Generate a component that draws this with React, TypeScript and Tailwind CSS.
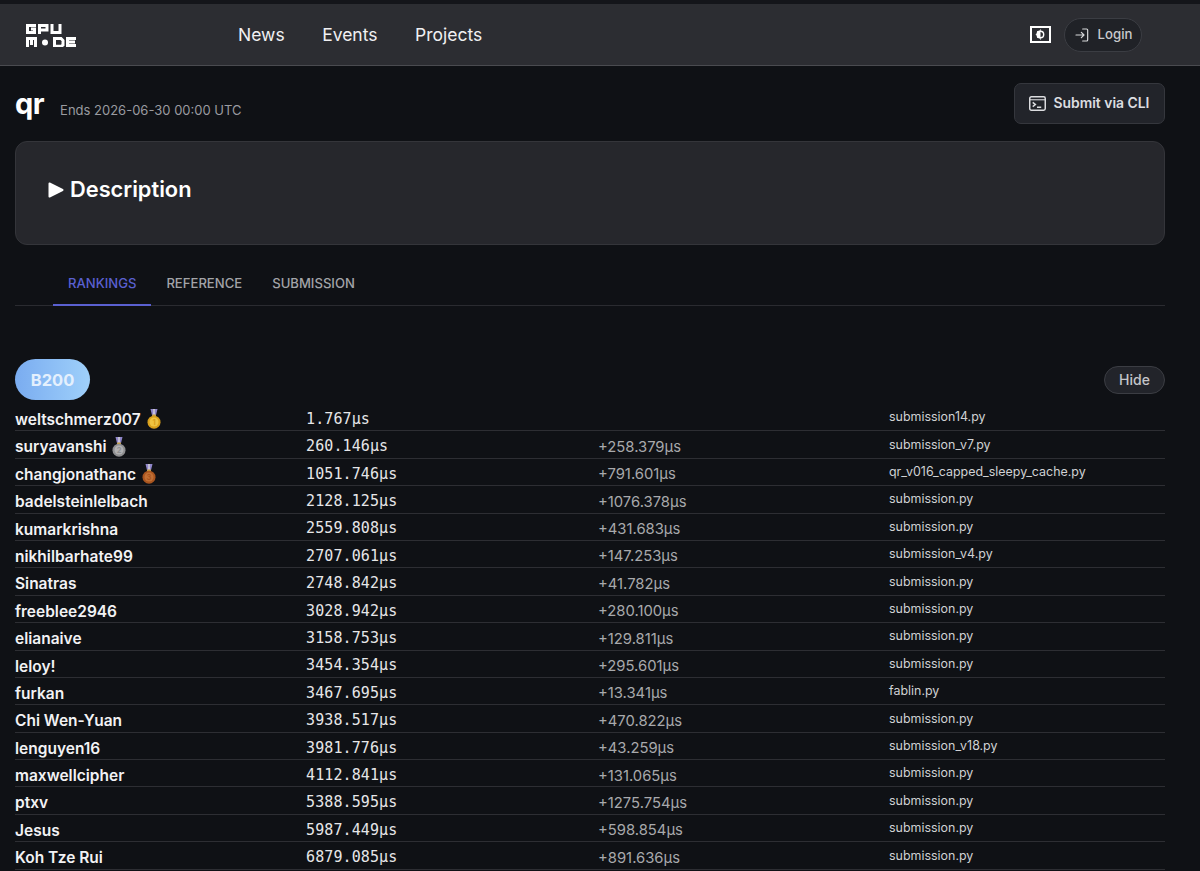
import React from "react";

const rows: [string, string, string, string, number?][] = [
  ["weltschmerz007", "1.767µs", "", "submission14.py", 1],
  ["suryavanshi", "260.146µs", "+258.379µs", "submission_v7.py", 2],
  ["changjonathanc", "1051.746µs", "+791.601µs", "qr_v016_capped_sleepy_cache.py", 3],
  ["badelsteinlelbach", "2128.125µs", "+1076.378µs", "submission.py"],
  ["kumarkrishna", "2559.808µs", "+431.683µs", "submission.py"],
  ["nikhilbarhate99", "2707.061µs", "+147.253µs", "submission_v4.py"],
  ["Sinatras", "2748.842µs", "+41.782µs", "submission.py"],
  ["freeblee2946", "3028.942µs", "+280.100µs", "submission.py"],
  ["elianaive", "3158.753µs", "+129.811µs", "submission.py"],
  ["leloy!", "3454.354µs", "+295.601µs", "submission.py"],
  ["furkan", "3467.695µs", "+13.341µs", "fablin.py"],
  ["Chi Wen-Yuan", "3938.517µs", "+470.822µs", "submission.py"],
  ["lenguyen16", "3981.776µs", "+43.259µs", "submission_v18.py"],
  ["maxwellcipher", "4112.841µs", "+131.065µs", "submission.py"],
  ["ptxv", "5388.595µs", "+1275.754µs", "submission.py"],
  ["Jesus", "5987.449µs", "+598.854µs", "submission.py"],
  ["Koh Tze Rui", "6879.085µs", "+891.636µs", "submission.py"],
];

function Medal({ n }: { n: number }) {
  const fill = n === 1 ? "#d9a01c" : n === 2 ? "#8f8f91" : "#a9551f";
  const hi = n === 1 ? "#f5cf4e" : n === 2 ? "#bcbcbe" : "#c9783c";
  return (
    <svg width="14" height="20" viewBox="0 0 14 20" className="ml-[6px] shrink-0 -mt-[1px]">
      <path d="M3.500 0h2.800L7 4 7.700 0h2.800L8.800 7H5.200z" fill="#8f86c9" />
      <path d="M6.200 0h1.600L7.500 6h-1z" fill="#e9e6f2" />
      <rect x="5.200" y="5.500" width="3.600" height="3" fill="#c9a13a" />
      <circle cx="7" cy="13.200" r="6.500" fill={fill} />
      <circle cx="7" cy="13" r="4.500" fill={hi} opacity="0.75" />
      <text x="7" y="15.800" textAnchor="middle" fontSize="7.500" fontWeight="700" fill={fill} fontFamily="Inter, sans-serif">{n}</text>
    </svg>
  );
}

function Logo() {
  return (
    <svg width="52" height="24" viewBox="0 0 52 24" className="block" fill="none" stroke="#fff" strokeWidth="3">
      <path d="M11 2.500H2.500v7h7V6H6" />
      <path d="M14.500 11V2.500H22v4.500h-7.500" />
      <path d="M27 1v8.500h8V1" />
      <path d="M2.500 24V15.500h8V24M6.500 15.500V22" />
      <circle cx="20" cy="19.500" r="3" fill="#fff" stroke="none" />
      <path d="M29.500 15.500H36l2 2v4.500l-1.500 1.200h-7z" />
      <path d="M51 15.500h-8.500v7H51M42.500 19H50" />
    </svg>
  );
}

export default function App() {
  return (
    <div className="min-h-[871px] h-[871px] overflow-hidden bg-[#0f1115] text-white font-['Inter',sans-serif]">
      <div className="h-[4px] bg-[#14151a]" />
      <header className="h-[62px] bg-[#2c2d32] border-b border-[#4a4b50] flex items-center pl-[25px] pr-[58px]">
        <div className="w-[213px] shrink-0"><Logo /></div>
        <nav className="flex gap-[37.500px] text-[17.500px] leading-none text-[#f0f0f2] font-normal">
          <span>News</span>
          <span>Events</span>
          <span>Projects</span>
        </nav>
        <div className="ml-auto flex items-center gap-[13px]">
          <svg width="21" height="17" viewBox="0 0 21 17" fill="none">
            <rect x="1" y="1" width="19" height="15" stroke="#fff" strokeWidth="2" />
            <path d="M10.500 4.500a4 4 0 0 0 0 8z" fill="#fff" />
            <circle cx="10.500" cy="8.500" r="3.200" stroke="#fff" strokeWidth="1.400" />
            <path d="M10.500 3.500v1M10.500 12.500v1M5.800 8.500h1M7.200 5.200l.8.800M7.200 11.800l.8-.8" stroke="#fff" strokeWidth="1" />
          </svg>
          <button className="h-[34px] w-[78px] rounded-full bg-[#202227] border border-[#3b3d43] flex items-center justify-center gap-[8px] text-[13.200px] font-medium text-[#c9cacd]">
            <svg width="16" height="16" viewBox="0 0 24 24" fill="none" stroke="#d8d9db" strokeWidth="1.800" strokeLinecap="round" strokeLinejoin="round">
              <path d="M13 3h6a1.500 1.500 0 0 1 1.500 1.500v15A1.500 1.500 0 0 1 19 21h-6" />
              <path d="M3 12h12M11 8l4 4-4 4" />
            </svg>
            Login
          </button>
        </div>
      </header>

      <main className="pl-[15px] pr-[35px]">
        <div className="flex items-center justify-between h-[75px]">
          <div className="flex items-center pt-[6px]">
            <h1 className="text-[29px] leading-none font-bold tracking-[-0.5px] -mt-[6px]">qr</h1>
            <span className="ml-[16px] text-[13px] text-[#9a9ba0] mt-[9px]">Ends 2026-06-30 00:00 UTC</span>
          </div>
          <button className="-mt-[1px] h-[41px] w-[151px] rounded-[7px] bg-[#22242a] border border-[#35373d] flex items-center justify-center gap-[8px] text-[13.900px] font-semibold text-[#dcdde0]">
            <svg width="17" height="15" viewBox="0 0 16 14" fill="none" stroke="#dcdde0" strokeWidth="1.400" className="-ml-[1px]">
              <rect x="0.700" y="0.700" width="14.600" height="12.600" rx="1.500" />
              <path d="M0.700 3.500h14.600" strokeWidth="1" />
              <path d="M3.500 6l2.500 2-2.500 2M7.500 10.500h4" />
            </svg>
            Submit via CLI
          </button>
        </div>

        <section className="h-[104px] rounded-[12px] bg-[#26272c] border border-[#34353a] pl-[32px] pt-[34px] flex items-start">
          <svg width="16" height="16" viewBox="0 0 16 16" className="mt-[6px] mr-[6px]"><path d="M1.500 1.500 14.500 8 1.500 14.500z" fill="#fff" stroke="#fff" strokeWidth="2" strokeLinejoin="round" /></svg>
          <h2 className="text-[21.800px] leading-[27px] font-semibold text-white">Description</h2>
        </section>

        <div className="mt-[21px] h-[40px] border-b border-[#2a2b30] pl-[38px] flex text-[13.100px] font-medium">
          <span className="px-[15px] leading-[35px] text-[#5a60d0] border-b-2 border-[#5a60d0] h-[40px]">RANKINGS</span>
          <span className="px-[15px] leading-[35px] text-[#a3a4a8]">REFERENCE</span>
          <span className="px-[15px] leading-[35px] text-[#a3a4a8]">SUBMISSION</span>
        </div>

        <div className="mt-[53px] flex items-center justify-between h-[41px]">
          <span className="h-[41px] w-[75px] pt-[1px] rounded-full bg-gradient-to-r from-[#7aacf0] to-[#9fd0fa] flex items-center justify-center text-[16.500px] font-bold text-[#e4f0fd]">B200</span>
          <button className="h-[28px] w-[61px] rounded-full bg-[#22242a] border border-[#3b3d43] text-[14px] font-medium text-[#c4c5c9]">Hide</button>
        </div>

        <div className="mt-[4px]">
          {rows.map(([name, time, delta, file, medal]) => (
            <div key={name} className="grid grid-cols-[291px_292px_291px_1fr] h-[27.400px] border-b border-[#2d2e33] items-center">
              <div className="flex items-center text-[15.500px] font-semibold text-[#f2f2f4] mt-[4px]">
                {name}
                {medal ? <Medal n={medal} /> : null}
              </div>
              <div className="font-['DejaVu_Sans_Mono',monospace] text-[15px] tracking-[0.1px] text-[#e6e6e8] mt-[3px]">{time}</div>
              <div className="text-[14.800px] text-[#a8a9ac] mt-[4px]">{delta}</div>
              <div className="text-[12.450px] text-[#d0d1d4] mt-[0px]">{file}</div>
            </div>
          ))}
        </div>
      </main>
    </div>
  );
}
